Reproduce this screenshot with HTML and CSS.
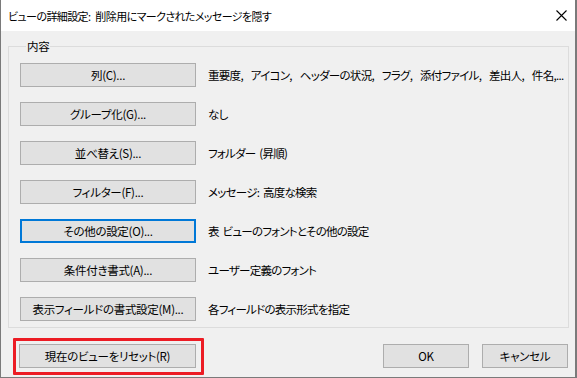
FILE: index.html
```html
<!DOCTYPE html>
<html lang="ja">
<head>
<meta charset="utf-8">
<title>ビューの詳細設定</title>
<link rel="stylesheet" href="styles.css">
</head>
<body>
<div class="window">
  <div class="titlebar">
    <span class="title">ビューの詳細設定: 削除用にマークされたメッセージを隠す</span>
    <svg class="close" width="11" height="11" viewBox="0 0 11 11" aria-hidden="true">
      <path d="M0.5 0.5 L10.5 10.5 M10.5 0.5 L0.5 10.5" stroke="#000" stroke-width="1.1" fill="none"/>
    </svg>
  </div>
  <div class="body">
    <fieldset class="group">
      <legend class="legend">内容</legend>
      <div class="rows">
        <div class="row"><button class="btn">列(C)...</button><span class="desc desc-list">重要度, アイコン, ヘッダーの状況, フラグ, 添付ファイル, 差出人, 件名,...</span></div>
        <div class="row"><button class="btn">グループ化(G)...</button><span class="desc">なし</span></div>
        <div class="row"><button class="btn">並べ替え(S)...</button><span class="desc">フォルダー (昇順)</span></div>
        <div class="row"><button class="btn">フィルター(F)...</button><span class="desc">メッセージ: 高度な検索</span></div>
        <div class="row"><button class="btn btn-focus">その他の設定(O)...</button><span class="desc">表 ビューのフォントとその他の設定</span></div>
        <div class="row"><button class="btn">条件付き書式(A)...</button><span class="desc">ユーザー定義のフォント</span></div>
        <div class="row"><button class="btn">表示フィールドの書式設定(M)...</button><span class="desc">各フィールドの表示形式を指定</span></div>
      </div>
    </fieldset>
    <div class="footer">
      <button class="btn btn-reset">現在のビューをリセット(R)</button>
      <div class="footer-right">
        <button class="btn btn-small">OK</button>
        <button class="btn btn-small">キャンセル</button>
      </div>
    </div>
  </div>
  <div class="highlight"></div>
</div>
</body>
</html>
```

FILE: styles.css
```css
* { box-sizing: border-box; }
html, body { margin: 0; padding: 0; }
body {
  width: 577px;
  height: 378px;
  overflow: hidden;
  background: #ffffff;
  font-family: "Noto Sans CJK JP", "Noto Sans", sans-serif;
  font-size: 11.5px;
  font-weight: 400;
  font-feature-settings: "palt";
  letter-spacing: -0.3px;
  word-spacing: 3px;
  color: #000;
}
.window {
  position: relative;
  width: 577px;
  height: 378px;
  border-left: 1px solid #7a7a7a;
  border-right: 2px solid #7a7a7a;
  border-bottom: 1px solid #7a7a7a;
  background: #f0f0f0;
  display: flex;
  flex-direction: column;
}
.titlebar {
  height: 31px;
  background: #ffffff;
  display: flex;
  align-items: center;
  justify-content: space-between;
  padding: 0 8px 0 7px;
  flex: none;
}
.title {
  font-size: 11px;
  letter-spacing: -0.6px;
  line-height: 14px;
  white-space: nowrap;
}
.close { display: block; }
.body {
  flex: 1;
  padding: 8px 6px 0 7px;
}
.group {
  margin: 0;
  padding: 9px 0 6px 11px;
  border: 1px solid #dcdcdc;
  min-width: 0;
}
.legend {
  margin-left: 6px;
  padding: 0 1px;
  line-height: 15px;
}
.rows {
  display: flex;
  flex-direction: column;
  gap: 15px;
}
.row {
  display: flex;
  align-items: center;
  gap: 12px;
  height: 24px;
  white-space: nowrap;
}
.btn {
  font: inherit;
  font-feature-settings: "palt";
  letter-spacing: inherit;
  word-spacing: inherit;
  color: #000;
  background: #e1e1e1;
  border: 1px solid #adadad;
  border-radius: 0;
  height: 24px;
  width: 176px;
  padding: 0;
  margin: 0;
  line-height: 14px;
  text-align: center;
  flex: none;
}
.btn-focus {
  border: 2px solid #0078d7;
}
.desc {
  line-height: 14px;
  letter-spacing: -0.75px;
  word-spacing: 2px;
}
.desc-list {
  letter-spacing: -0.7px;
  word-spacing: 6px;
}
.footer {
  display: flex;
  justify-content: space-between;
  align-items: center;
  margin: 16px 1px 0 11px;
}
.btn-reset { width: 177px; }
.footer-right {
  display: flex;
  gap: 13px;
}
.btn-small { width: 86px; }
.highlight {
  position: absolute;
  left: 12px;
  top: 338px;
  width: 191px;
  height: 37px;
  border: 3px solid #ec1c24;
  border-radius: 1px;
  pointer-events: none;
}
```
